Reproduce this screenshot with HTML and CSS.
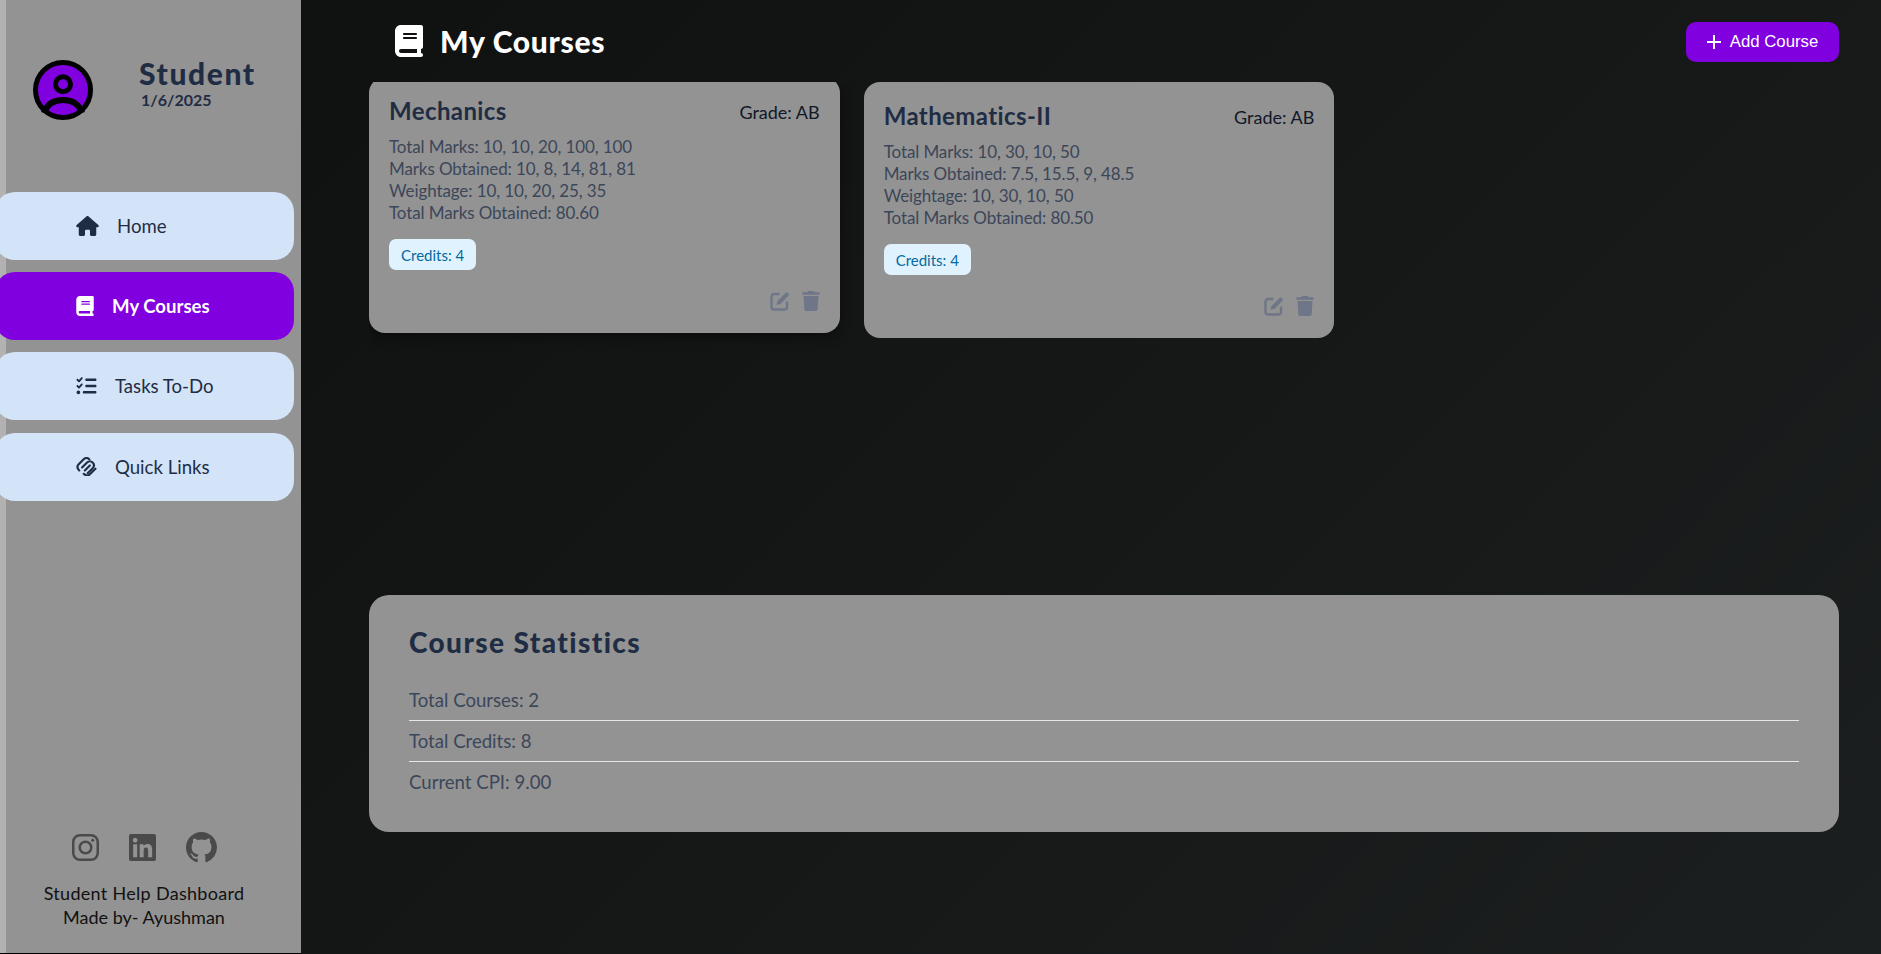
FILE: index.html
```html
<!DOCTYPE html>
<html lang="en">
    <head>
        <meta charset="UTF-8">
        <meta name="viewport" content="width=device-width, initial-scale=1.0">
        <title>My Courses</title>
        <link rel="stylesheet" href="styles.css">
    </head>
    <body>
        <aside class="sidebar">
            <div class="profile">
                <svg class="avatar" viewBox="0 0 60 60">
                    <circle cx="30" cy="30" r="27.500" fill="#8000e0" stroke="#000" stroke-width="5"/>
                    <circle cx="30" cy="24.300" r="7.500" fill="#8000e0" stroke="#000" stroke-width="5"/>
                    <path d="M11 53C14 44 21 40 30 40S46 44 49 53" fill="none" stroke="#000" stroke-width="6"/>
                </svg>
                <div class="profile-text">
                    <div class="profile-name">Student</div>
                    <div class="profile-date">1/6/2025</div>
                </div>
            </div>
            <nav class="nav">
                <a class="nav-item" href="#">
                    <svg class="icon-home" viewBox="0 0 576 512"><path d="M575.8 255.5c0 18-15 32.1-32 32.1h-32l.7 160.2c0 2.7-.2 5.4-.5 8.1V472c0 22.1-17.9 40-40 40H456c-1.1 0-2.2 0-3.3-.1c-1.4 .1-2.8 .1-4.2 .1H416 392c-22.1 0-40-17.9-40-40V448 384c0-17.7-14.3-32-32-32H256c-17.7 0-32 14.3-32 32v64 24c0 22.1-17.9 40-40 40H160 128.1c-1.5 0-3-.1-4.5-.2c-1.2 .1-2.4 .2-3.6 .2H104c-22.1 0-40-17.9-40-40V360c0-.9 0-1.9 .1-2.8V287.6H32c-18 0-32-14-32-32.1c0-9 3-17 10-24L266.4 8c7-7 15-8 22-8s15 2 21 7L564.8 231.5c8 7 12 15 11 24z"/></svg>
                    Home
                </a>
                <a class="nav-item active" href="#">
                    <svg class="icon-book" viewBox="0 0 448 512"><path d="M96 0C43 0 0 43 0 96V416c0 53 43 96 96 96H384h32c17.7 0 32-14.3 32-32s-14.3-32-32-32V384c17.7 0 32-14.3 32-32V32c0-17.7-14.3-32-32-32H384 96zm0 384H352v64H96c-17.7 0-32-14.3-32-32s14.3-32 32-32zm32-240c0-8.8 7.2-16 16-16H336c8.8 0 16 7.2 16 16s-7.2 16-16 16H144c-8.8 0-16-7.2-16-16zm16 48H336c8.8 0 16 7.2 16 16s-7.2 16-16 16H144c-8.8 0-16-7.2-16-16s7.2-16 16-16z"/></svg>
                    My Courses
                </a>
                <a class="nav-item" href="#">
                    <svg class="icon-tasks" viewBox="0 0 512 512"><path d="M152.1 38.2c9.9 8.9 10.7 24 1.8 33.9l-72 80c-4.4 4.9-10.6 7.8-17.2 7.9s-12.9-2.4-17.6-7L7 113C-2.3 103.6-2.3 88.4 7 79s24.6-9.4 33.9 0l22.1 22.1 55.1-61.2c8.9-9.9 24-10.7 33.9-1.8zm0 160c9.9 8.9 10.7 24 1.8 33.9l-72 80c-4.4 4.9-10.6 7.8-17.2 7.9s-12.9-2.4-17.6-7L7 273c-9.4-9.4-9.4-24.6 0-33.9s24.6-9.4 33.9 0l22.1 22.1 55.1-61.2c8.9-9.9 24-10.7 33.9-1.8zM224 96c0-17.7 14.3-32 32-32H480c17.7 0 32 14.3 32 32s-14.3 32-32 32H256c-17.7 0-32-14.3-32-32zm0 160c0-17.7 14.3-32 32-32H480c17.7 0 32 14.3 32 32s-14.3 32-32 32H256c-17.7 0-32-14.3-32-32zM160 416c0-17.7 14.3-32 32-32H480c17.7 0 32 14.3 32 32s-14.3 32-32 32H192c-17.7 0-32-14.3-32-32zM48 368a48 48 0 1 1 0 96 48 48 0 1 1 0-96z"/></svg>
                    Tasks To-Do
                </a>
                <a class="nav-item" href="#">
                    <svg class="icon-links" viewBox="1 .5 18 17">
                        <path d="M3.500 12.500C1.500 10.500 1.500 8.500 3 7L7.500 2.500C9 1 11 1 12.500 2.500"/>
                        <path d="M6 10L10.500 5.500C12 4 14 4 15.500 5.500C17 7 17 9 15.500 10.500L11 15"/>
                        <path d="M8.500 12.500L13 8"/>
                        <path d="M7.500 15.500C9.500 17.500 11.500 17.500 13 16L18 11"/>
                    </svg>
                    Quick Links
                </a>
            </nav>
            <div class="sidebar-foot">
                <div class="socials">
                    <svg class="icon-insta" viewBox="0 0 28 28">
                        <rect x="1.300" y="1.300" width="25.400" height="25.400" rx="7"/>
                        <circle cx="14" cy="14" r="6"/>
                        <circle class="insta-dot" cx="21.500" cy="6.500" r="1.600"/>
                    </svg>
                    <svg class="icon-linkedin" viewBox="0 32 448 448"><path d="M416 32H31.900C14.300 32 0 46.500 0 64.300v383.400C0 465.500 14.300 480 31.900 480H416c17.600 0 32-14.500 32-32.300V64.300c0-17.800-14.400-32.300-32-32.300zM135.400 416H69V202.200h66.500V416zm-33.200-243c-21.300 0-38.500-17.300-38.500-38.500S80.900 96 102.200 96c21.200 0 38.500 17.300 38.500 38.500 0 21.300-17.200 38.500-38.500 38.500zm282.100 243h-66.400V312c0-24.800-.5-56.700-34.500-56.700-34.600 0-39.900 27-39.900 54.900V416h-66.400V202.200h63.700v29.200h.9c8.900-16.800 30.600-34.500 62.900-34.500 67.200 0 79.700 44.300 79.700 101.900V416z"/></svg>
                    <svg class="icon-github" viewBox="0 0 16 16"><path d="M8 0C3.580 0 0 3.580 0 8c0 3.540 2.290 6.530 5.470 7.590.4.070.55-.17.55-.38 0-.19-.01-.82-.01-1.490-2.010.37-2.530-.49-2.690-.94-.09-.23-.48-.94-.82-1.130-.28-.15-.68-.52-.01-.53.63-.01 1.080.58 1.230.82.720 1.210 1.870.87 2.330.66.070-.52.280-.87.510-1.070-1.780-.2-3.640-.89-3.640-3.950 0-.87.310-1.590.820-2.150-.08-.2-.36-1.020.080-2.120 0 0 .670-.21 2.200.82.640-.18 1.320-.27 2-.27.680 0 1.360.090 2 .27 1.530-1.040 2.200-.82 2.200-.82.440 1.100.160 1.920.080 2.120.510.560.820 1.270.820 2.150 0 3.070-1.870 3.750-3.650 3.950.290.250.540.730.540 1.480 0 1.070-.01 1.930-.01 2.200 0 .210.150.460.550.380A8.013 8.013 0 0016 8c0-4.420-3.580-8-8-8z"/></svg>
                </div>
                <div class="foot-text">
                    <div class="foot-line">Student Help Dashboard</div>
                    <div>Made by- Ayushman</div>
                </div>
            </div>
        </aside>

        <main class="main">
            <header class="topbar">
                <h1 class="page-title">
                    <svg class="icon-title" viewBox="0 0 448 512"><path d="M96 0C43 0 0 43 0 96V416c0 53 43 96 96 96H384h32c17.7 0 32-14.3 32-32s-14.3-32-32-32V384c17.7 0 32-14.3 32-32V32c0-17.7-14.3-32-32-32H384 96zm0 384H352v64H96c-17.7 0-32-14.3-32-32s14.3-32 32-32zm32-240c0-8.8 7.2-16 16-16H336c8.8 0 16 7.2 16 16s-7.2 16-16 16H144c-8.8 0-16-7.2-16-16zm16 48H336c8.8 0 16 7.2 16 16s-7.2 16-16 16H144c-8.8 0-16-7.2-16-16s7.2-16 16-16z"/></svg>
                    My Courses
                </h1>
                <button class="add-btn">
                    <svg class="icon-plus" viewBox="0 0 14 14"><path d="M7 0v14M0 7h14" stroke="#fff" stroke-width="2"/></svg>
                    Add Course
                </button>
            </header>

            <section class="cards">
                <article class="card lifted">
                    <div class="card-head">
                        <h2 class="card-title">Mechanics</h2>
                        <span class="grade">Grade: AB</span>
                    </div>
                    <div class="card-body">
                        <div>Total Marks: 10, 10, 20, 100, 100</div>
                        <div>Marks Obtained: 10, 8, 14, 81, 81</div>
                        <div>Weightage: 10, 10, 20, 25, 35</div>
                        <div>Total Marks Obtained: 80.60</div>
                    </div>
                    <span class="credits">Credits: 4</span>
                    <div class="card-actions">
                        <svg class="icon-edit" viewBox="0 0 20 20">
                            <path class="edit-box" d="M9.500 3H4A2.500 2.500 0 0 0 1.500 5.500V16A2.500 2.500 0 0 0 4 18.500H14.500A2.500 2.500 0 0 0 17 16V10.500"/>
                            <path d="M6.500 14L7.500 10L15 2.500C16 1.500 17 1 18 2C19.200 3.200 19 4.200 18 5.200L10.500 13Z"/>
                        </svg>
                        <svg class="icon-trash" viewBox="0 0 448 512"><path d="M135.200 17.700L128 32H32C14.300 32 0 46.300 0 64S14.300 96 32 96H416c17.700 0 32-14.300 32-32s-14.300-32-32-32H320l-7.200-14.300C307.400 6.800 296.300 0 284.200 0H163.800c-12.100 0-23.200 6.800-28.600 17.700zM416 128H32L53.200 467c1.600 25.300 22.600 45 47.900 45H346.900c25.300 0 46.300-19.700 47.900-45L416 128z"/></svg>
                    </div>
                </article>
                <article class="card">
                    <div class="card-head">
                        <h2 class="card-title">Mathematics-II</h2>
                        <span class="grade">Grade: AB</span>
                    </div>
                    <div class="card-body">
                        <div>Total Marks: 10, 30, 10, 50</div>
                        <div>Marks Obtained: 7.5, 15.5, 9, 48.5</div>
                        <div>Weightage: 10, 30, 10, 50</div>
                        <div>Total Marks Obtained: 80.50</div>
                    </div>
                    <span class="credits">Credits: 4</span>
                    <div class="card-actions">
                        <svg class="icon-edit" viewBox="0 0 20 20">
                            <path class="edit-box" d="M9.500 3H4A2.500 2.500 0 0 0 1.500 5.500V16A2.500 2.500 0 0 0 4 18.500H14.500A2.500 2.500 0 0 0 17 16V10.500"/>
                            <path d="M6.500 14L7.500 10L15 2.500C16 1.500 17 1 18 2C19.200 3.200 19 4.200 18 5.200L10.500 13Z"/>
                        </svg>
                        <svg class="icon-trash" viewBox="0 0 448 512"><path d="M135.200 17.700L128 32H32C14.300 32 0 46.300 0 64S14.300 96 32 96H416c17.700 0 32-14.300 32-32s-14.300-32-32-32H320l-7.200-14.300C307.400 6.800 296.300 0 284.200 0H163.800c-12.100 0-23.200 6.800-28.600 17.700zM416 128H32L53.200 467c1.600 25.300 22.600 45 47.900 45H346.900c25.300 0 46.300-19.700 47.900-45L416 128z"/></svg>
                    </div>
                </article>
            </section>

            <section class="stats">
                <h2 class="stats-title">Course Statistics</h2>
                <div class="stats-row">Total Courses: 2</div>
                <div class="stats-row">Total Credits: 8</div>
                <div class="stats-row">Current CPI: 9.00</div>
            </section>
        </main>
    </body>
</html>
```

FILE: styles.css
```css
*{
    margin: 0;
    padding: 0;
    box-sizing: border-box;
}
body{
    width: 1881px;
    height: 954px;
    display: flex;
    overflow: hidden;
    font-family: "Lato", "Open Sans", sans-serif;
    background: linear-gradient(135deg, #0e0f0f, #1c1f1f);
}

/* sidebar */
.sidebar{
    width: 301px;
    height: 953px;
    flex: none;
    display: flex;
    flex-direction: column;
    background-color: #939393;
    border-left: 6px solid #b2b2b2;
    box-shadow: 0 1px 0 #000;
}
.profile{
    display: flex;
    align-items: center;
    gap: 46px;
    height: 60px;
    margin: 60px 0 0 27px;
}
.avatar{
    width: 60px;
    height: 60px;
}
.profile-text{
    margin-top: -13px;
}
.profile-name{
    font-size: 30px;
    line-height: 32px;
    font-weight: 900;
    letter-spacing: 1.6px;
    color: #1f2d44;
}
.profile-date{
    font-size: 16px;
    line-height: 22px;
    font-weight: 700;
    color: #1f2d44;
    margin-left: 2px;
}
.nav{
    display: flex;
    flex-direction: column;
    gap: 12.2px;
    margin: 72px 0 0 -11px;
    width: 299px;
}
.nav-item{
    height: 68px;
    display: flex;
    align-items: center;
    gap: 18px;
    padding-left: 81px;
    border-radius: 20px;
    background-color: #d3e3f8;
    color: #1f2d44;
    font-size: 18.6px;
    text-decoration: none;
}
.nav-item svg{
    height: 20px;
    fill: #1f2d44;
}
.nav-item.active{
    background-color: #8000e0;
    color: #fff;
    font-weight: 700;
}
.nav-item.active svg{
    fill: #fff;
}
.nav-item .icon-links{
    height: 19px;
    fill: none;
    stroke: #1f2d44;
    stroke-width: 1.9;
    stroke-linecap: round;
}
.icon-home{
    width: 23px;
}
.icon-book{
    width: 18px;
}
.icon-tasks{
    width: 21px;
}
.icon-links{
    width: 21px;
}
.sidebar-foot{
    margin-top: auto;
    padding-bottom: 24px;
}
.socials{
    display: flex;
    align-items: center;
    gap: 30px;
    margin-left: 66px;
    margin-bottom: 18px;
}
.icon-insta{
    width: 27px;
    height: 27px;
    fill: none;
    stroke: #4a4a4a;
    stroke-width: 2.6;
}
.insta-dot{
    fill: #4a4a4a;
    stroke: none;
}
.icon-linkedin{
    width: 27px;
    height: 27px;
    fill: #4a4a4a;
}
.icon-github{
    width: 31px;
    height: 31px;
    fill: #4a4a4a;
}
.foot-text{
    width: 276px;
    text-align: center;
    font-size: 18px;
    line-height: 24px;
    color: #111;
}
.foot-line{
    letter-spacing: .3px;
}

/* main area */
.main{
    flex: 1;
    height: 954px;
    display: flex;
    flex-direction: column;
    padding: 0 42px 0 68px;
}
.topbar{
    height: 82px;
    flex: none;
    display: flex;
    align-items: flex-start;
    justify-content: space-between;
}
.page-title{
    display: flex;
    align-items: center;
    gap: 17px;
    height: 82px;
    padding: 0 0 0 26px;
    font-size: 30px;
    font-weight: 900;
    letter-spacing: .7px;
    color: #fff;
}
.icon-title{
    width: 28px;
    height: 32px;
    fill: #fff;
}
.add-btn{
    margin-top: 22px;
    width: 153px;
    height: 40px;
    display: flex;
    align-items: center;
    justify-content: center;
    gap: 9px;
    border: none;
    border-radius: 10px;
    background-color: #8000e0;
    color: #fff;
    font-family: "Liberation Sans", Arial, sans-serif;
    font-size: 16.8px;
}
.icon-plus{
    width: 14px;
    height: 14px;
}
.cards{
    height: 513px;
    flex: none;
    display: flex;
    gap: 24px;
    align-items: flex-start;
    overflow: hidden;
    padding-bottom: 10px;
}
.card{
    width: 470.67px;
    height: 256px;
    padding: 20px;
    display: flex;
    flex-direction: column;
    align-items: flex-start;
    border-radius: 16px;
    background-color: #939393;
}
.card.lifted{
    transform: translateY(-5px);
    box-shadow: 0 4px 12px rgba(0,0,0,.4);
}
.card-head{
    width: 100%;
    display: flex;
    justify-content: space-between;
    align-items: center;
}
.card-title{
    font-size: 24px;
    line-height: 28px;
    font-weight: 700;
    letter-spacing: .4px;
    color: #1f2d44;
    margin-bottom: 2px;
}
.grade{
    font-size: 18px;
    color: #111827;
}
.card-body{
    margin-top: 9px;
    font-size: 17px;
    line-height: 22px;
    letter-spacing: -.1px;
    color: #3c4659;
}
.credits{
    margin-top: 15px;
    height: 31px;
    padding: 0 12px;
    display: flex;
    align-items: center;
    border-radius: 7px;
    background-color: #e0f2fe;
    color: #0369a1;
    font-size: 15px;
}
.card-actions{
    margin-top: auto;
    margin-bottom: 2px;
    align-self: flex-end;
    display: flex;
    align-items: flex-end;
    gap: 12px;
}
.card-actions svg{
    height: 20px;
    fill: #6f7688;
}
.edit-box{
    fill: none;
    stroke: #6f7688;
    stroke-width: 2.4;
}
.icon-edit{
    width: 20px;
}
.icon-trash{
    width: 18px;
}
.stats{
    height: 237px;
    flex: none;
    padding: 29px 40px;
    border-radius: 20px;
    background-color: #939393;
}
.stats-title{
    font-size: 28px;
    line-height: 36px;
    font-weight: 900;
    letter-spacing: 1.4px;
    color: #1f2d44;
    margin-bottom: 20px;
}
.stats-row{
    height: 41px;
    display: flex;
    align-items: center;
    font-size: 18.6px;
    color: #3c4659;
    border-bottom: 1px solid #e5e7eb;
}
.stats-row:last-child{
    border-bottom: none;
    padding-bottom: 1px;
}
```
